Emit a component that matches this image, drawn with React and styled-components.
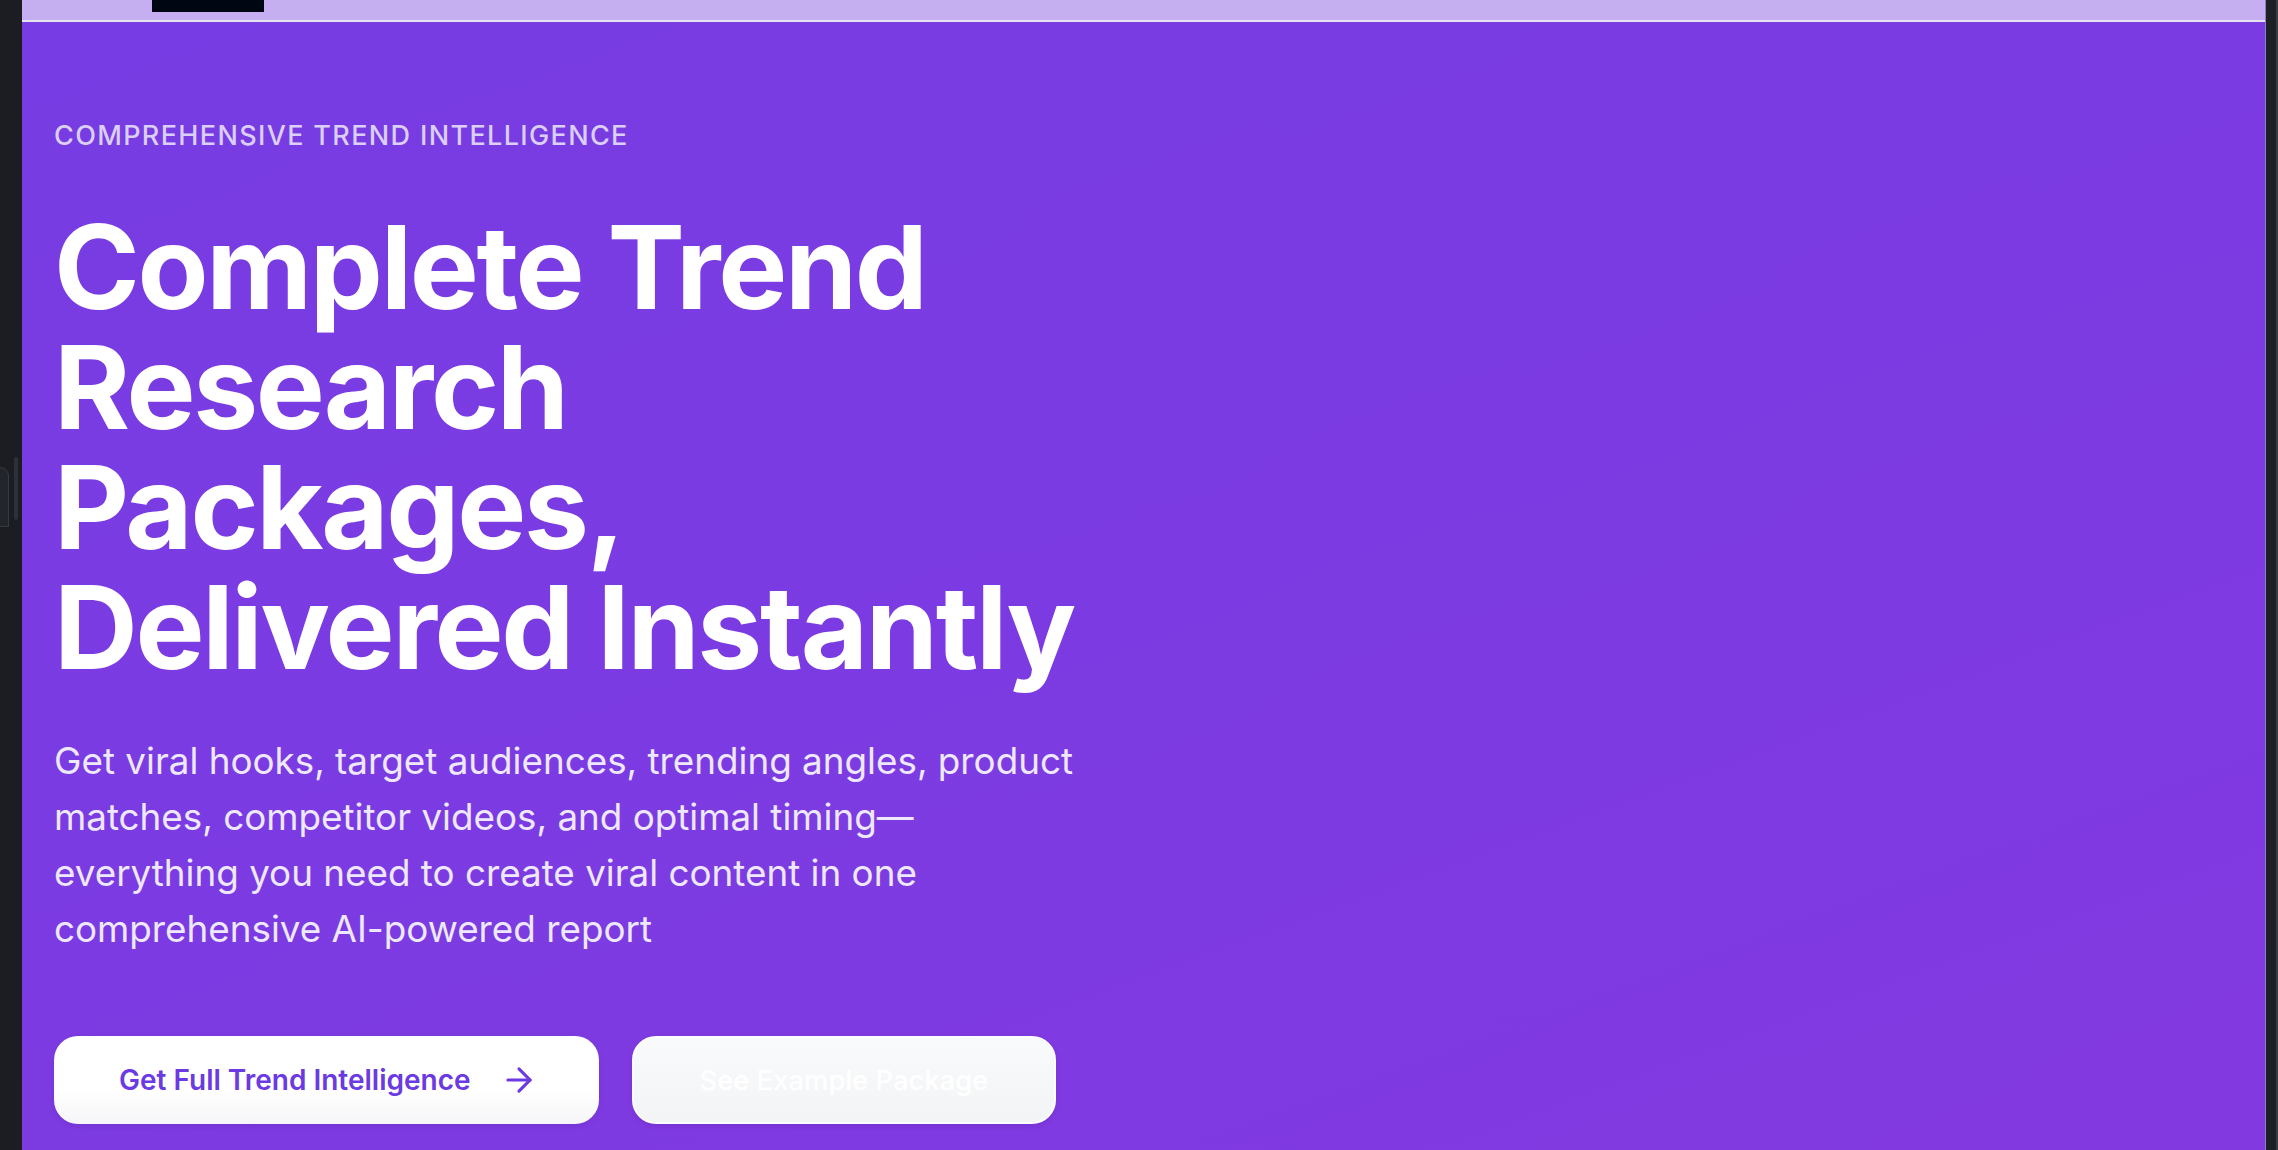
import React from "react";
import styled, { createGlobalStyle } from "styled-components";
import { ArrowRight } from "lucide-react";

const Global = createGlobalStyle`
  html, body { margin: 0; padding: 0; background: #1b1d22; }
  body { font-family: Inter, "Noto Sans", "Liberation Sans", sans-serif; -webkit-font-smoothing: antialiased; }
  * { box-sizing: border-box; }
`;

const Frame = styled.div`
  display: flex;
  width: 2278px;
  height: 1150px;
  overflow: hidden;
  background: #1b1d22;
`;

const LeftRail = styled.div`
  flex: 0 0 22px;
  display: flex;
  align-items: flex-start;
  gap: 5px;
  padding-top: 457px;
  background: #1b1d22;
`;

const RailTab = styled.div`
  width: 9px;
  height: 60px;
  margin-top: 10px;
  background: #22252b;
  border: 1px solid #373a41;
  border-left: none;
  border-radius: 0 9px 0 0;
`;

const RailPill = styled.div`
  width: 4px;
  height: 63px;
  border-radius: 2px;
  background: #2d3037;
`;

const RightRail = styled.div`
  flex: 0 0 13px;
  display: flex;
  background: #1d2025;
  border-left: 1px solid #8a80c6;
  justify-content: flex-end;
`;

const RailEdge = styled.div`
  width: 2px;
  background: #3b3e44;
`;

const Main = styled.div`
  flex: 1;
  display: flex;
  flex-direction: column;
  min-width: 0;
`;

const TopBar = styled.header`
  flex: 0 0 22px;
  display: flex;
  align-items: flex-start;
  padding-left: 130px;
  background: #c5aff0;
  border-bottom: 2px solid #e6e2ee;
`;

const LogoBlock = styled.div`
  width: 112px;
  height: 12px;
  background: #000712;
`;

const Hero = styled.section`
  flex: 1;
  display: flex;
  flex-direction: column;
  align-items: flex-start;
  padding: 94px 32px 0;
  background: linear-gradient(160deg, #773ce3 0%, #7c3be2 50%, #8339e0 100%);
`;

const Eyebrow = styled.p`
  margin: 0;
  font-size: 27px;
  line-height: 40px;
  font-weight: 500;
  letter-spacing: 0.05em;
  text-transform: uppercase;
  color: #dbcff8;
`;

const Title = styled.h1`
  margin: 51px 0 0;
  font-size: 116px;
  line-height: 120px;
  font-weight: 700;
  letter-spacing: -0.02em;
  color: #ffffff;
`;

const Lead = styled.p`
  margin: 46px 0 0;
  font-size: 36.8px;
  line-height: 56px;
  font-weight: 400;
  color: #eee8fc;
`;

const Actions = styled.div`
  display: flex;
  gap: 33px;
  margin-top: 79px;
`;

const Button = styled.button`
  height: 88px;
  display: inline-flex;
  align-items: center;
  gap: 29px;
  padding: ${(p) => (p.$primary ? "0 61px 0 65px" : "0 66px")};
  border-radius: 24px;
  font-family: inherit;
  font-size: ${(p) => (p.$primary ? "28px" : "27.4px")};
  font-weight: ${(p) => (p.$primary ? 600 : 500)};
  cursor: pointer;
  color: ${(p) => (p.$primary ? "#6b3ae2" : "#ffffff")};
  background: ${(p) =>
    p.$primary
      ? "linear-gradient(180deg, #ffffff 0%, #ffffff 60%, #f6f6f8 100%)"
      : "linear-gradient(180deg, #f9fafb 0%, #f3f4f6 100%)"};
  border: ${(p) => (p.$primary ? "none" : "2px solid #fdfdfe")};
  box-shadow: 0 2px 6px rgba(40, 10, 90, 0.12);
`;

export default function App() {
  return (
    <>
      <Global />
      <Frame>
        <LeftRail>
          <RailTab />
          <RailPill />
        </LeftRail>
        <Main>
          <TopBar>
            <LogoBlock />
          </TopBar>
          <Hero>
            <Eyebrow>Comprehensive Trend Intelligence</Eyebrow>
            <Title>
              Complete Trend
              <br />
              Research
              <br />
              Packages,
              <br />
              Delivered Instantly
            </Title>
            <Lead>
              Get viral hooks, target audiences, trending angles, product
              <br />
              matches, competitor videos, and optimal timing—
              <br />
              everything you need to create viral content in one
              <br />
              comprehensive AI-powered report
            </Lead>
            <Actions>
              <Button $primary>
                Get Full Trend Intelligence
                <ArrowRight size={38} strokeWidth={2} />
              </Button>
              <Button>See Example Package</Button>
            </Actions>
          </Hero>
        </Main>
        <RightRail>
          <RailEdge />
        </RightRail>
      </Frame>
    </>
  );
}
